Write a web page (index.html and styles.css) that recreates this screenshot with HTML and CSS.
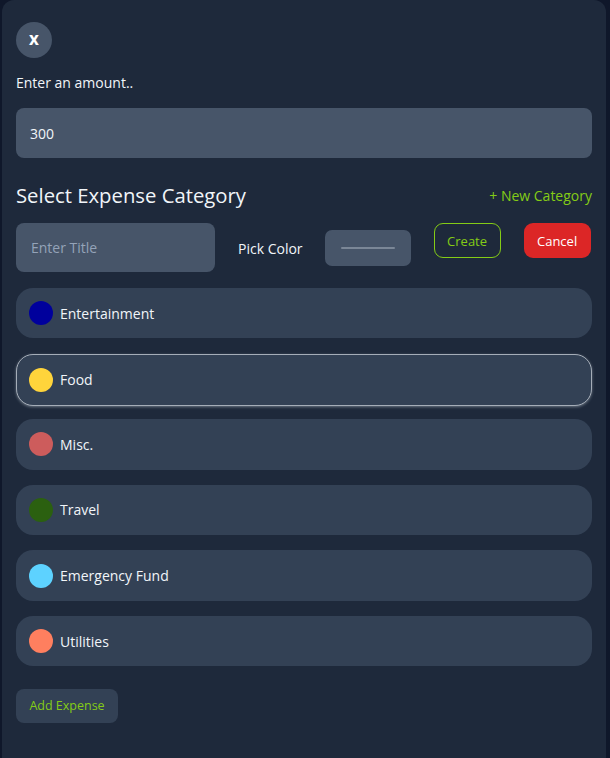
FILE: index.html
```html
<!DOCTYPE html>
<html lang="en">
<head>
<meta charset="utf-8">
<title>Add Expense</title>
<link rel="stylesheet" href="styles.css">
</head>
<body>
<div class="panel">
  <button class="close">x</button>
  <label class="label">Enter an amount..</label>
  <div class="amount">300</div>
  <div class="head-row">
    <h2 class="heading">Select Expense Category</h2>
    <span class="new-cat">+ New Category</span>
  </div>
  <div class="create-row">
    <div class="title-input">Enter Title</div>
    <span class="pick">Pick Color</span>
    <div class="color-input"><span class="swatch"></span></div>
    <button class="btn-create">Create</button>
    <button class="btn-cancel">Cancel</button>
  </div>
  <ul class="cats">
    <li class="cat"><span class="dot" style="background:#00009c"></span>Entertainment</li>
    <li class="cat selected"><span class="dot" style="background:#ffd43b"></span>Food</li>
    <li class="cat"><span class="dot" style="background:#cd5c5c"></span>Misc.</li>
    <li class="cat"><span class="dot" style="background:#2b6010"></span>Travel</li>
    <li class="cat"><span class="dot" style="background:#5dd2ff"></span>Emergency Fund</li>
    <li class="cat"><span class="dot" style="background:#ff7f5f"></span>Utilities</li>
  </ul>
  <button class="add">Add Expense</button>
</div>
</body>
</html>
```
FILE: styles.css
```css
* { box-sizing: border-box; }
html, body { margin: 0; padding: 0; }
body {
  background: #0f172a;
  width: 610px;
  height: 758px;
  overflow: hidden;
  font-family: "Open Sans", "Noto Sans", sans-serif;
  color: #f1f5f9;
  font-size: 14px;
}
.panel {
  margin: 0 4px 0 2px;
  height: 770px;
  background: #1e293b;
  border-radius: 12px;
  padding: 22px 14px 0 14px;
  display: flex;
  flex-direction: column;
}
.close {
  width: 36px;
  height: 36px;
  border-radius: 50%;
  border: none;
  background: #475569;
  color: #fff;
  font-family: inherit;
  font-weight: 700;
  font-size: 17px;
  padding: 0 0 3px 0;
  line-height: 1;
}
.label {
  display: block;
  margin-top: 15px;
  line-height: 20px;
  font-size: 14px;
}
.amount {
  margin-top: 15px;
  height: 50px;
  background: #475569;
  border-radius: 8px;
  padding: 0 14px;
  display: flex;
  align-items: center;
  font-size: 14px;
}
.head-row {
  margin-top: 23px;
  display: flex;
  justify-content: space-between;
  align-items: center;
  height: 28px;
}
.heading {
  margin: 0;
  font-size: 20.3px;
  font-weight: 400;
  line-height: 28px;
}
.new-cat {
  color: #84cc16;
  font-size: 14px;
}
.create-row {
  margin-top: 14px;
  display: flex;
  align-items: flex-start;
  height: 49px;
}
.create-row > * {
  flex: none;
  white-space: nowrap;
}
.title-input {
  width: 199px;
  height: 49px;
  background: #475569;
  border-radius: 8px;
  padding: 0 15px;
  display: flex;
  align-items: center;
  color: #94a3b8;
}
.pick {
  margin-left: 23px;
  line-height: 52px;
}
.color-input {
  margin-left: 22px;
  margin-top: 7px;
  width: 86px;
  height: 36px;
  background: #475569;
  border-radius: 7px;
  display: flex;
  align-items: center;
  justify-content: center;
}
.swatch {
  width: 54px;
  height: 2px;
  background: #7b8797;
  border-radius: 1px;
}
.btn-create {
  margin-left: 23px;
  width: 67px;
  height: 35px;
  background: transparent;
  border: 1px solid #84cc16;
  border-radius: 9px;
  color: #84cc16;
  font-family: inherit;
  font-size: 13px;
  padding: 0;
}
.btn-cancel {
  margin-left: 23px;
  width: 67px;
  height: 35px;
  background: #dc2626;
  border: none;
  border-radius: 9px;
  color: #fff;
  font-family: inherit;
  font-size: 13px;
  padding: 0;
}
.cats {
  list-style: none;
  margin: 16px 0 0 0;
  padding: 0;
  display: flex;
  flex-direction: column;
  gap: 15.2px;
}
.cat {
  height: 50.4px;
  background: #334155;
  border-radius: 17px;
  display: flex;
  align-items: center;
  padding-left: 13px;
  font-size: 14px;
}
.cat.selected {
  height: 52px;
  margin: 0 0 -1.6px 0;
  border: 1px solid #a5adb8;
  box-shadow: 0 1px 3px rgba(200, 210, 220, 0.45);
  padding-left: 12px;
}
.dot {
  width: 24px;
  height: 24px;
  border-radius: 50%;
  margin-right: 7px;
  flex: none;
}
.add {
  margin-top: 22.6px;
  align-self: flex-start;
  width: 102px;
  height: 34px;
  background: #334155;
  border: none;
  border-radius: 8px;
  color: #84cc16;
  font-family: inherit;
  font-size: 12.5px;
  padding: 0;
}
```
